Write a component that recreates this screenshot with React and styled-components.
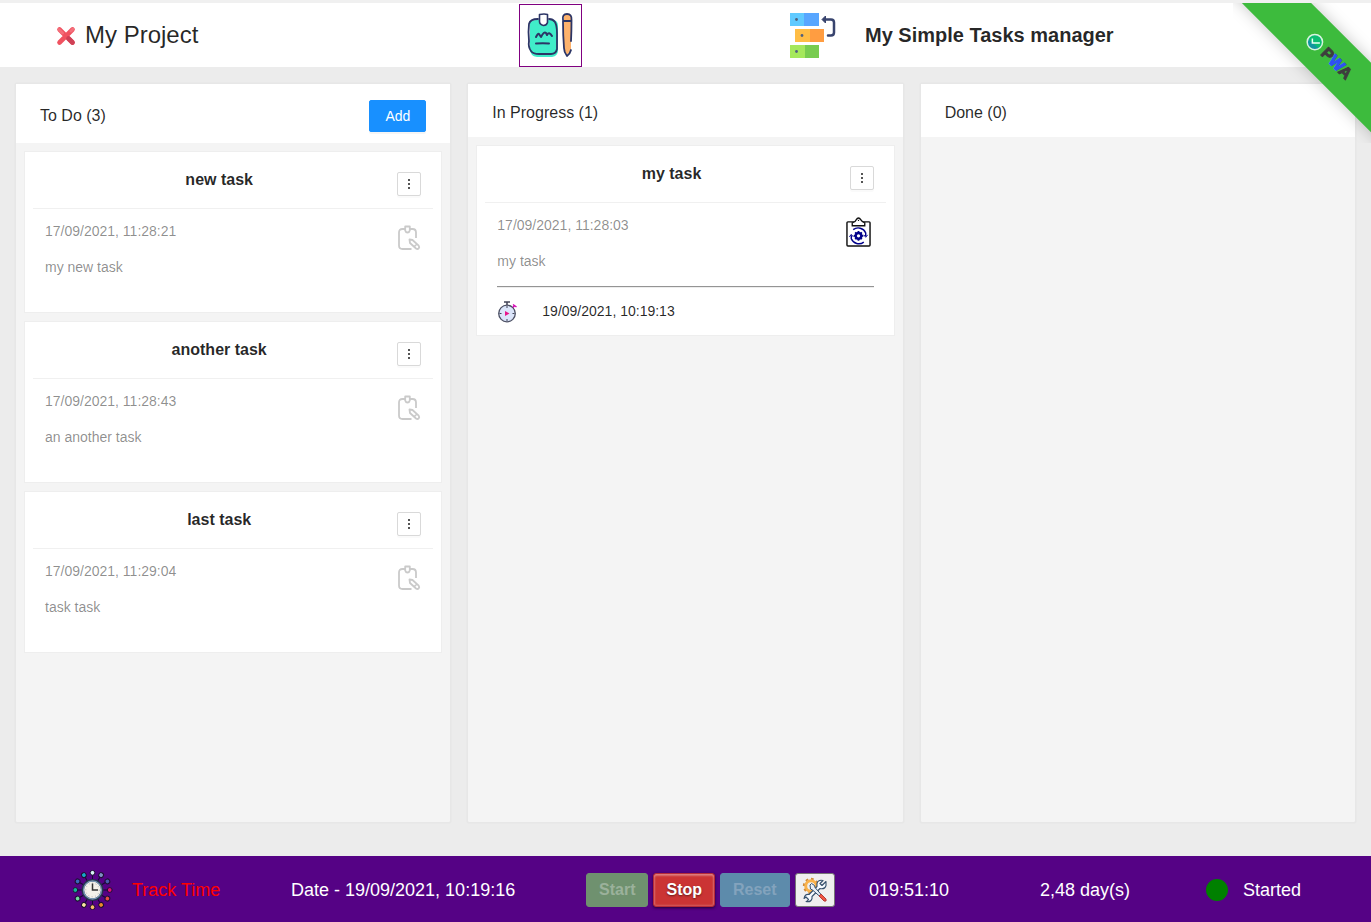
import React from "react";
import styled, { createGlobalStyle } from "styled-components";

const GlobalStyle = createGlobalStyle`
  *, *::before, *::after { box-sizing: border-box; }
  body {
    margin: 0;
    background: #ececec;
    color: rgba(0, 0, 0, 0.85);
    font: 14px/20px "Liberation Sans", Arial, sans-serif;
  }
  h1, h2, h3, p { margin: 0; }
  button { font-family: inherit; cursor: pointer; }
  svg { display: block; flex: none; }
`;

const Page = styled.div`
  position: relative;
  display: flex;
  flex-direction: column;
  min-height: 100vh;
`;

const Header = styled.header`
  display: grid;
  grid-template-columns: 519fr 270fr 582fr;
  align-items: center;
  height: 67px;
  border-top: 3px solid #cbcbcb;
  border-image: linear-gradient(#f0f0f0 66%, #cbcbcb 66%) 3;
  background: #fff;
`;

const Project = styled.div`
  display: flex;
  align-items: center;
  gap: 9px;
  padding-left: 56px;
`;

const ProjectName = styled.h2`
  font-size: 24px;
  line-height: 32px;
  font-weight: 400;
`;

const PlainButton = styled.button`
  display: block;
  padding: 0;
  border: 0;
  background: none;
`;

const NotesButton = styled(PlainButton)`
  width: 63px;
  height: 63px;
  margin-top: 1px;
  border: 1px solid #800080;
`;

const Brand = styled.div`
  display: flex;
  align-items: center;
  gap: 28px;
`;

const BrandName = styled.h1`
  font-size: 20px;
  line-height: 28px;
  font-weight: 700;
`;

const RibbonCorner = styled.div`
  position: absolute;
  top: 3px;
  right: 0;
  width: 138px;
  height: 140px;
  overflow: hidden;
  pointer-events: none;
`;

const Ribbon = styled.a`
  position: absolute;
  top: 22px;
  left: -30px;
  display: flex;
  align-items: center;
  justify-content: center;
  gap: 3px;
  width: 240px;
  height: 49px;
  padding-left: 18px;
  background: #3dbb3d;
  box-shadow: 0 0 16px rgba(0, 0, 0, 0.22);
  color: #3d3d3d;
  font-size: 16px;
  font-weight: 700;
  -webkit-text-stroke: 1px currentColor;
  text-decoration: none;
  transform: rotate(45deg);
  pointer-events: auto;
`;

const RibbonAccent = styled.span`
  color: #2f50f5;
`;

const Board = styled.main`
  display: grid;
  grid-template-columns: repeat(3, minmax(0, 1fr));
  gap: 16px;
  flex: 1;
  padding: 16px 15px 33px;
`;

const Column = styled.section`
  border: 1px solid #e7e7e7;
  border-radius: 2px;
  background: #f4f4f4;
  box-shadow: 0 0 2px rgba(0, 0, 0, 0.06);
`;

const ColumnHead = styled.div`
  display: flex;
  align-items: center;
  justify-content: space-between;
  padding: 16px 24px 11px;
  background: #fff;
`;

const ColumnTitle = styled.h2`
  font-size: 16px;
  line-height: 26px;
  font-weight: 400;
`;

const AddButton = styled.button`
  height: 32px;
  padding: 0 15px;
  border: 1px solid #1890ff;
  border-radius: 2px;
  background: #1890ff;
  box-shadow: 0 2px 0 rgba(0, 0, 0, 0.04);
  color: #fff;
  font-size: 14px;
`;

const CardList = styled.div`
  display: flex;
  flex-direction: column;
  gap: 8px;
  padding: 8px;
`;

const Card = styled.article`
  padding: 0 8px;
  border: 1px solid #eee;
  background: #fff;
`;

const CardHead = styled.div`
  display: flex;
  align-items: flex-start;
  gap: 4px;
  padding: 18px 12px 12px;
  height: 57px;
  border-bottom: 1px solid #f0f0f0;
`;

const CardTitle = styled.h3`
  flex: 1;
  font-size: 16px;
  line-height: 20px;
  font-weight: 700;
  text-align: center;
`;

const MenuButton = styled.button`
  display: flex;
  align-items: center;
  justify-content: center;
  width: 24px;
  height: 24px;
  margin-top: 2px;
  padding: 0;
  border: 1px solid #d9d9d9;
  border-radius: 2px;
  background: #fff;
  box-shadow: 0 2px 0 rgba(0, 0, 0, 0.02);
`;

const CardBody = styled.div`
  padding: 12px 12px ${(p) => (p.$tracked ? 12 : 35)}px;
`;

const Details = styled.div`
  display: flex;
  justify-content: space-between;
  color: rgba(0, 0, 0, 0.45);
`;

const Description = styled.p`
  margin-top: 16px;
`;

const StatusIcon = styled.div`
  padding: ${(p) => (p.$active ? "1px 3px 0 0" : "4px 0 0")};
`;

const Rule = styled.hr`
  margin: 15px 0 13px;
  border: 0;
  border-top: 1px solid #949494;
  border-bottom: 1px solid #ededed;
`;

const Tracked = styled.div`
  display: flex;
  gap: 25px;
`;

const Footer = styled.footer`
  display: grid;
  grid-template-columns: 218fr 295fr 283fr 171fr 166fr 165fr;
  align-items: center;
  height: 66px;
  padding-left: 73px;
  background: #550285;
  color: #fff;
  font-size: 18px;
  line-height: 24px;
`;

const FooterItem = styled.div`
  display: flex;
  align-items: center;
  gap: ${(p) => p.$gap || 0}px;
  padding-top: 2px;
  white-space: nowrap;
`;

const TrackLabel = styled.span`
  color: #f00;
`;

const ControlButton = styled.button`
  height: 34px;
  padding: 0 12px;
  border: 1px solid ${(p) => p.$edge};
  border-radius: 3px;
  background: ${(p) => p.$fill};
  color: ${(p) => p.$ink};
  font-size: 16px;
  font-weight: 700;
  ${(p) =>
    p.$raised &&
    `
    box-shadow: inset 0 2px 2px rgba(255, 255, 255, 0.25),
      inset 0 0 2px 1px rgba(255, 255, 255, 0.2), 0 1px 3px rgba(0, 0, 0, 0.6);
    text-shadow: 0 1px 2px rgba(0, 0, 0, 0.5);
  `}
`;

const ToolsButton = styled.button`
  width: 40px;
  height: 34px;
  padding: 0 6px;
  border: 1px solid #767676;
  border-radius: 3px;
  background: #efefef;
`;

const StatusDot = styled.span`
  width: 22px;
  height: 22px;
  border-radius: 50%;
  background: #008000;
`;

const CrossIcon = () => (
  <svg width="20" height="22" viewBox="0 0 20 22" fill="none" strokeLinecap="round">
    <path d="M3.500 5.500L16.500 18.500M16.500 5.500L3.500 18.500" stroke="#f05260" strokeWidth="4.600" />
    <path d="M12.500 14.500L16.500 18.500" stroke="#cf4156" strokeWidth="4.600" />
    <path d="M3 5.500l3.500 3.500M17 5l-2 2" stroke="#f4707c" strokeWidth="3" />
  </svg>
);

const NotesIcon = () => (
  <svg width="61" height="61" viewBox="0 0 61 61" fill="none" strokeLinecap="round" strokeLinejoin="round">
    <path d="M10 17q4-3 15-2h9q4 1 4 6v24q0 6-6 7H17q-7-1-7-8z" fill="#40edc9" />
    <path d="M18 14q-8 0-9 5-1 8 0 17-1 6 2 10 2 3 8 3h12q5 0 6-5 0-8 0-16 0-7-2-11-2-3-6-3" stroke="#2c3566" strokeWidth="1.800" />
    <path d="M19.500 9.500q5-1 8 0v8q-1 3-4 3-4-1-4-4z" fill="#fff" stroke="#2c3566" strokeWidth="1.600" />
    <path d="M16 32q2-4 3-3l2 3q3-6 5-4l1 2q2-4 5 1M16 38.500q7-.5 13 0" stroke="#2c3566" strokeWidth="2" />
    <path d="M44 10q4-3 7 0v35l-4 5-3-6z" fill="#fdb26c" />
    <path d="M43 15q-1-6 4-6t4.500 6q0 11-.5 21M43 16h8M43 16q0 14 1 27 0 4 3 8 3-2 4-6" stroke="#2c3566" strokeWidth="1.800" />
  </svg>
);

const BrandIcon = () => (
  <svg width="48" height="48" viewBox="0 0 48 48">
    <path d="M1 2h14v13H1z" fill="#60caff" />
    <path d="M15 2h15v13H15z" fill="#58a6ff" />
    <path d="M6 18h15v13H6z" fill="#ffbd45" />
    <path d="M21 18h14v13H21z" fill="#ff9d41" />
    <path d="M1 34h15v13H1z" fill="#a5e85c" />
    <path d="M16 34h14v13H16z" fill="#78cc50" />
    <g fill="#50617e">
      <circle cx="7.500" cy="8.500" r="1.400" />
      <circle cx="13" cy="24.500" r="1.400" />
      <circle cx="7.500" cy="40.500" r="1.400" />
    </g>
    <path d="M35 8.500h7q3 0 3 3v10q0 3-3 3h-3" fill="none" stroke="#38446e" strokeWidth="2.500" strokeLinecap="round" />
    <path d="M33 8.500l3.500-3.500v7z" fill="#38446e" stroke="#38446e" strokeLinejoin="round" />
  </svg>
);

const RibbonClock = () => (
  <svg width="18" height="18" viewBox="0 0 18 18" fill="none">
    <g transform="rotate(-45 9 9)">
      <circle cx="9" cy="9" r="7.700" fill="#0bbd72" />
      <path d="M2 6A7.700 7.700 0 0 0 13 15.500z" fill="#1295a0" />
      <circle cx="9" cy="9" r="7.700" stroke="#d7f4df" strokeWidth="1.500" />
      <path d="M6.500 5.500v4.500H14" stroke="#e8fff2" strokeWidth="1.500" />
    </g>
  </svg>
);

const DotsIcon = () => (
  <svg width="12" height="14" viewBox="0 0 12 14" fill="#555">
    <path d="M5 2h2v2H5zM5 6h2v2H5zM5 10h2v2H5z" />
  </svg>
);

const DraftIcon = () => (
  <svg width="24" height="26" viewBox="0 0 24 26" fill="none" stroke="#cacaca" strokeWidth="1.800" strokeLinejoin="round">
    <path d="M8 4H5.500Q2 4 2 7.500v13Q2 24 5.500 24h9M13 4h2.500Q19 4 19 7.500V13" />
    <path d="M8.200 1.500h4.600V5.500q-.5 2-2.300 2t-2.300-2z" />
    <path d="M12.500 14.500l.5 3.500 6 5.500q1.600 1 2.700-.2t0-2.600L15.500 15zM17.500 21.500l2.200-2.500" />
  </svg>
);

const ActiveIcon = () => (
  <svg width="25" height="31" viewBox="0 0 26 32" fill="none">
    <rect x="1" y="6" width="24" height="25" rx="1" stroke="#111" strokeWidth="1.500" />
    <path d="M6.500 10V7q3-.5 4-3 2.500-4 5 0 1.500 2.500 4 3v3z" fill="#fff" stroke="#111" strokeWidth="1.400" />
    <circle cx="13" cy="4.500" r=".7" fill="#111" />
    <path d="M7.500 14a8.500 8.500 0 0 1 13 3.500v3.500M18.500 27a8.500 8.500 0 0 1-13-3.500V20" stroke="#00008b" strokeWidth="1.500" />
    <path d="M3.500 21.500l2-2.500 2 2.500M18.500 19.500l2 2.500 2-2.500" stroke="#00008b" />
    <circle cx="13" cy="20.500" r="3" stroke="#00008b" strokeWidth="2.600" />
    <path d="M13 15.500v2M13 23.500v2M8 20.500h2M16 20.500h2M9.500 17l1.500 1.500M15 22.500l1.500 1.500M16.500 17l-1.500 1.500M11 22.500l-1.500 1.500" stroke="#00008b" strokeWidth="1.800" />
  </svg>
);

const StopwatchIcon = () => (
  <svg width="20" height="22" viewBox="0 0 20 22" fill="none">
    <circle cx="10" cy="12.500" r="8.300" fill="#dbe5fa" stroke="#4c5064" strokeWidth="1.300" />
    <path d="M7 1h6M10 1v3" stroke="#414458" strokeWidth="1.500" />
    <path d="M10 5v2M10 18v2M2.500 12.500h2M15.500 12.500h2" stroke="#414458" />
    <path d="M8 10l4.500 2.500L8 15z" fill="#e9168c" />
    <path d="M16 3.500l3.500 2.500M17.500 4.500l-1.500 2" stroke="#d50ab5" strokeWidth="1.500" />
  </svg>
);

const beads = ["#d7f4f4", "#7f8fc4", "#4c5bb0", "#e0107a", "#e94b45", "#ee8a2a", "#f6bd68", "#fae6a0", "#72dba0", "#12b795", "#3b66bc", "#15a9c9"];

const TrackIcon = () => (
  <svg width="40" height="40" viewBox="0 0 40 40">
    {beads.map((color, i) => (
      <g key={color} transform={`rotate(${i * 30} 19.500 20)`}>
        <path d="M19.500 4.500v7" stroke="#160a33" />
        <circle cx="19.500" cy="2.800" r="2.400" fill={color} stroke="#1d1033" strokeWidth="1" />
      </g>
    ))}
    <circle cx="19.500" cy="20" r="9.700" fill="#f4f1ea" stroke="#26354c" strokeWidth="2.500" />
    <circle cx="19.500" cy="20" r="9" fill="none" stroke="#7997b5" strokeWidth="1.300" />
    <circle cx="19.500" cy="20" r="6.800" fill="none" stroke="#b6b6b6" strokeDasharray="1 2.500" />
    <path d="M19.500 13.500V20H25" fill="none" stroke="#333" strokeWidth="1.500" />
  </svg>
);

const ToolsIcon = () => (
  <svg width="26" height="26" viewBox="0 0 26 26" fill="none" strokeLinejoin="round">
    <circle cx="9" cy="9" r="5.300" stroke="#f9b24a" strokeWidth="3" />
    <circle cx="9" cy="9" r="7.300" stroke="#d08a35" strokeWidth="1.700" strokeDasharray="2.700 3" />
    <path d="M4 20l2.500 2.500q-1 2-2.500 2 5 1 6-3l0-2 8-8q5 1 6-3l0-4-4 4-2-2 3-3q-5-1-6 3v3l-8 8q-4-1-5 4z" fill="#f6fbff" stroke="#35506c" strokeWidth="1.100" />
    <path d="M8 8l1.500-1.500 3 2 .5 2 7 8-1.500 1.500-8-7-2-1z" fill="#e7eef5" stroke="#35506c" />
    <path d="M17 19l2-2 5 5q1 3-2 2z" fill="#ef5540" stroke="#b43a36" />
  </svg>
);

const columns = [
  {
    title: "To Do",
    canAdd: true,
    tasks: [
      { title: "new task", created: "17/09/2021, 11:28:21", text: "my new task" },
      { title: "another task", created: "17/09/2021, 11:28:43", text: "an another task" },
      { title: "last task", created: "17/09/2021, 11:29:04", text: "task task" },
    ],
  },
  {
    title: "In Progress",
    tasks: [{ title: "my task", created: "17/09/2021, 11:28:03", text: "my task", started: "19/09/2021, 10:19:13" }],
  },
  { title: "Done", tasks: [] },
];

const TaskCard = ({ task }) => (
  <Card>
    <CardHead>
      <CardTitle>{task.title}</CardTitle>
      <MenuButton aria-label="Task menu">
        <DotsIcon />
      </MenuButton>
    </CardHead>
    <CardBody $tracked={Boolean(task.started)}>
      <Details>
        <div>
          <p>{task.created}</p>
          <Description>{task.text}</Description>
        </div>
        <StatusIcon $active={Boolean(task.started)}>{task.started ? <ActiveIcon /> : <DraftIcon />}</StatusIcon>
      </Details>
      {task.started && (
        <>
          <Rule />
          <Tracked>
            <StopwatchIcon />
            <p>{task.started}</p>
          </Tracked>
        </>
      )}
    </CardBody>
  </Card>
);

export default function App() {
  return (
    <>
      <GlobalStyle />
      <Page>
        <Header>
          <Project>
            <PlainButton aria-label="Close project">
              <CrossIcon />
            </PlainButton>
            <ProjectName>My Project</ProjectName>
          </Project>
          <NotesButton aria-label="Notes">
            <NotesIcon />
          </NotesButton>
          <Brand>
            <BrandIcon />
            <BrandName>My Simple Tasks manager</BrandName>
          </Brand>
        </Header>
        <Board>
          {columns.map((column) => (
            <Column key={column.title}>
              <ColumnHead>
                <ColumnTitle>{`${column.title} (${column.tasks.length})`}</ColumnTitle>
                {column.canAdd && <AddButton>Add</AddButton>}
              </ColumnHead>
              <CardList>
                {column.tasks.map((task) => (
                  <TaskCard key={task.title} task={task} />
                ))}
              </CardList>
            </Column>
          ))}
        </Board>
        <Footer>
          <FooterItem $gap={19}>
            <TrackIcon />
            <TrackLabel>Track Time</TrackLabel>
          </FooterItem>
          <FooterItem>Date - 19/09/2021, 10:19:16</FooterItem>
          <FooterItem $gap={5}>
            <ControlButton disabled $fill="#6f916f" $edge="#6f916f" $ink="#9bb19b">
              Start
            </ControlButton>
            <ControlButton $raised $fill="#cb3434" $edge="#b52b3a" $ink="#fff">
              Stop
            </ControlButton>
            <ControlButton disabled $fill="#5d8bab" $edge="#5d8bab" $ink="#83a3bd">
              Reset
            </ControlButton>
            <ToolsButton aria-label="Settings">
              <ToolsIcon />
            </ToolsButton>
          </FooterItem>
          <FooterItem>019:51:10</FooterItem>
          <FooterItem>2,48 day(s)</FooterItem>
          <FooterItem $gap={15}>
            <StatusDot />
            Started
          </FooterItem>
        </Footer>
        <RibbonCorner>
          <Ribbon href="#install">
            <RibbonClock />
            <span>
              P<RibbonAccent>W</RibbonAccent>A
            </span>
          </Ribbon>
        </RibbonCorner>
      </Page>
    </>
  );
}
